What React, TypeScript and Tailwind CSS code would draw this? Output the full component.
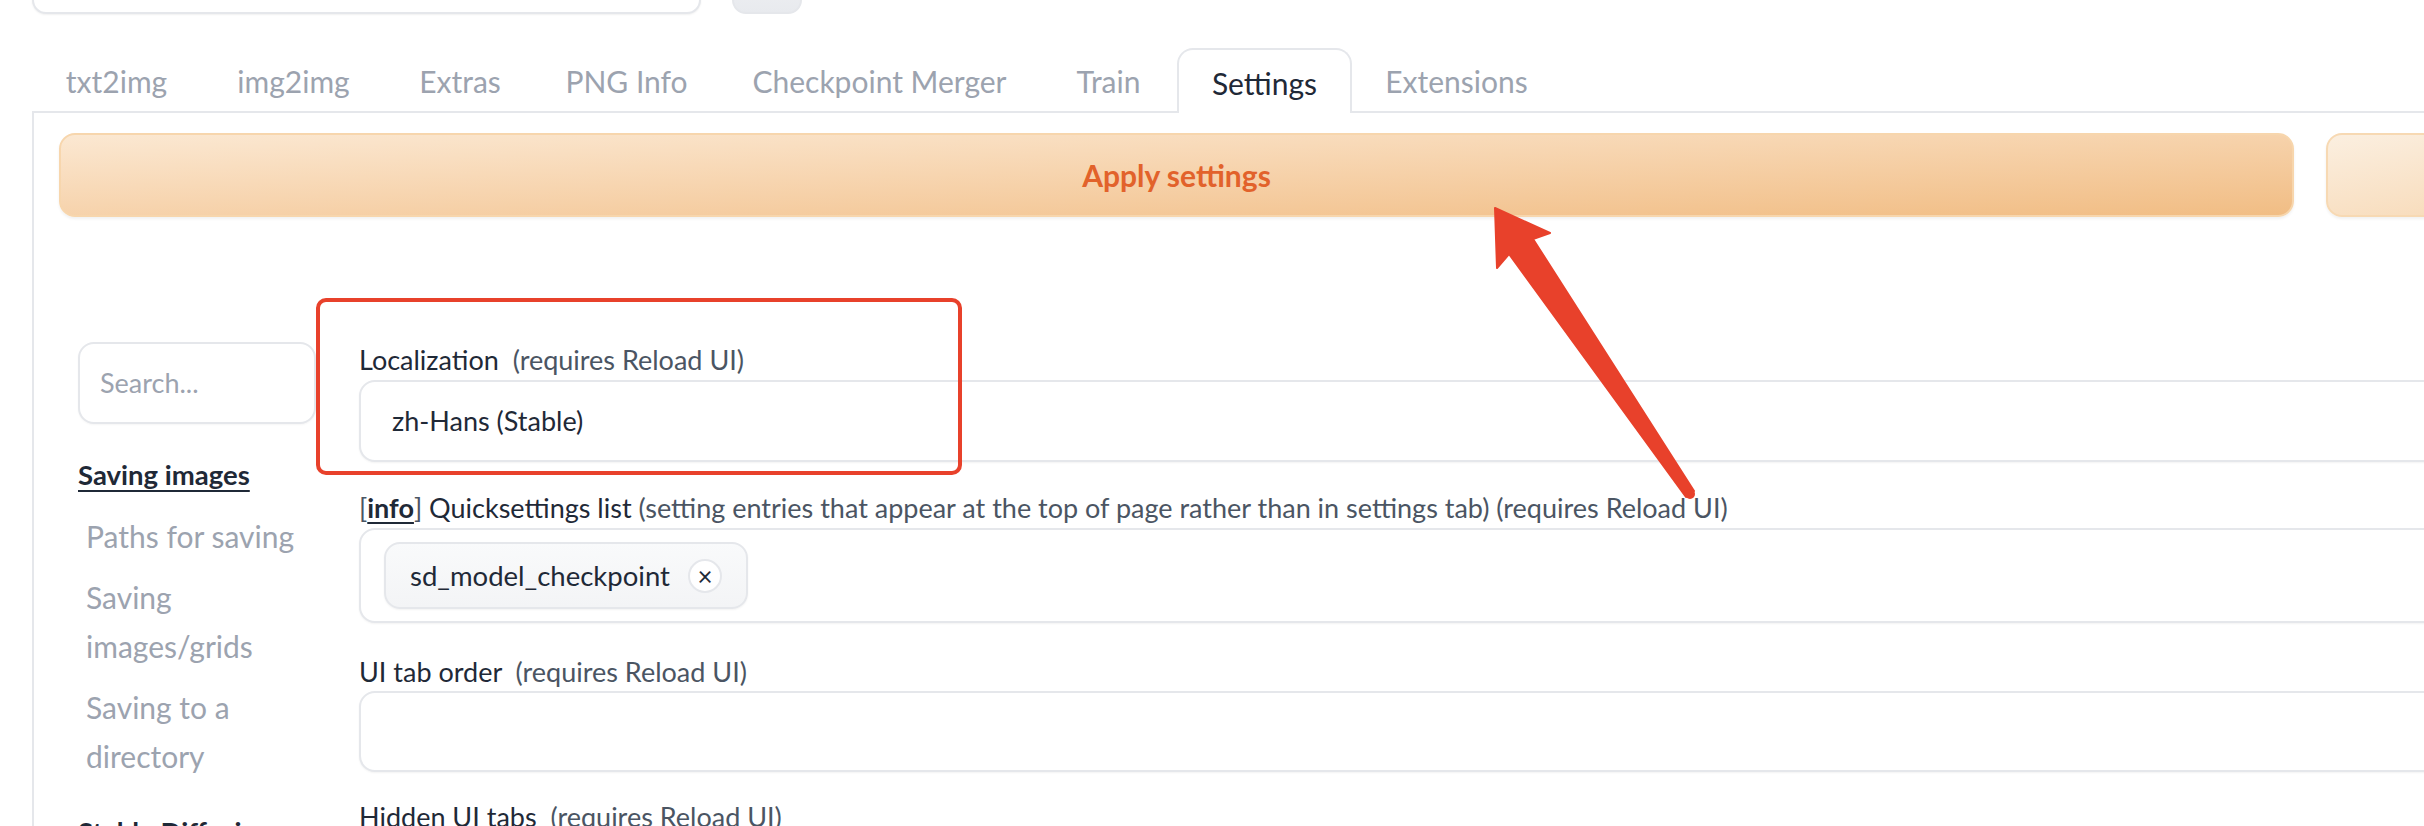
import React from "react";

const tabs: { name: string; w: string; active?: boolean }[] = [
  { name: "txt2img", w: "w-[169px]" },
  { name: "img2img", w: "w-[185px]" },
  { name: "Extras", w: "w-[148px]" },
  { name: "PNG Info", w: "w-[185px]" },
  { name: "Checkpoint Merger", w: "w-[321px]" },
  { name: "Train", w: "w-[137px]" },
  { name: "Settings", w: "w-[175px]", active: true },
  { name: "Extensions", w: "w-[209px]" },
];

function Label({ main, note }: { main: React.ReactNode; note: string }) {
  return (
    <div className="h-[36px] leading-[36px] text-[27px] whitespace-pre text-[#1f2937]">
      {main}
      <span className="text-[#4b5563]">{note}</span>
    </div>
  );
}

export default function App() {
  return (
    <div className="relative w-[2424px] h-[826px] overflow-hidden bg-white font-['Lato',sans-serif]">
      <div className="w-[2900px] pl-[32px]">
        {/* top row (mostly off-screen) */}
        <div className="-mt-[50px] flex h-[64px] gap-[31px]">
          <div className="w-[669px] h-[64px] rounded-[14px] border-2 border-[#e5e7eb] bg-white shadow-[0_1px_2px_rgba(0,0,0,0.06)]" />
          <div className="w-[70px] h-[64px] rounded-[14px] border-2 border-[#e5e7eb] bg-gradient-to-b from-[#f3f4f6] to-[#e8eaee]" />
        </div>

        {/* tabs */}
        <div className="mt-[34px] flex h-[65px] border-b-2 border-[#e5e7eb]">
          {tabs.map((t) =>
            t.active ? (
              <div
                key={t.name}
                className={`${t.w} relative z-10 -mb-[2px] flex h-[65px] items-center justify-center rounded-t-[16px] border-2 border-b-0 border-[#e5e7eb] bg-white pt-[4px] text-[30px] text-[#1f2937]`}
              >
                {t.name}
              </div>
            ) : (
              <div
                key={t.name}
                className={`${t.w} flex h-[63px] items-center justify-center pt-[4px] text-[30px] text-[#9ca3af]`}
              >
                {t.name}
              </div>
            )
          )}
        </div>

        {/* panel */}
        <div className="h-[800px] border-l-2 border-[#e5e7eb] pl-[25px] pt-[20px]">
          <div className="flex gap-[32px]">
            <div className="flex h-[84px] w-[2235px] items-center justify-center rounded-[16px] border-2 border-[#f7d6ad] bg-gradient-to-br from-[#fbe8d2] to-[#f1bd84] text-[30px] font-bold text-[#e2622b] shadow-[0_2px_3px_rgba(0,0,0,0.06)]">
              Apply settings
            </div>
            <div className="h-[84px] w-[400px] rounded-[16px] border-2 border-[#f7d9b3] bg-gradient-to-br from-[#fbefe0] to-[#f6d2a8] shadow-[0_2px_3px_rgba(0,0,0,0.06)]" />
          </div>

          <div className="mt-[125px] flex">
            {/* sidebar */}
            <div className="ml-[19px] w-[238px] shrink-0">
              <div className="flex h-[82px] items-center rounded-[16px] border-2 border-[#e5e7eb] bg-white pl-[20px] text-[27px] text-[#9ca3af] shadow-[0_1px_2px_rgba(0,0,0,0.04)]">
                Search...
              </div>
              <div className="mt-[31px] h-[40px] leading-[40px] text-[27.5px] font-bold text-[#1f2937] underline underline-offset-[5px] decoration-2">
                Saving images
              </div>
              <div className="mt-[17px] flex flex-col gap-[12px] pl-[8px] text-[30px] leading-[49px] text-[#9ca3af]">
                <div>Paths for saving</div>
                <div>Saving images/grids</div>
                <div>Saving to a directory</div>
              </div>
              <div className="mt-[31px] h-[40px] leading-[40px] text-[27.5px] font-bold text-[#1f2937]">
                Stable Diffusion
              </div>
            </div>

            {/* main */}
            <div className="ml-[43px] w-[2300px]">
              <Label main="Localization  " note="(requires Reload UI)" />
              <div className="mt-[2px] flex h-[82px] items-center rounded-[16px] border-2 border-[#e5e7eb] bg-white pl-[31px] text-[27px] text-[#1f2937] shadow-[0_1px_2px_rgba(0,0,0,0.05)]">
                zh-Hans (Stable)
              </div>

              <div className="mt-[28px]">
                <Label
                  main={
                    <>
                      <span className="text-[#4b5563]">[</span>
                      <span className="font-bold underline underline-offset-[4px] decoration-2">info</span>
                      <span className="text-[#4b5563]">]</span> Quicksettings list{" "}
                    </>
                  }
                  note="(setting entries that appear at the top of page rather than in settings tab) (requires Reload UI)"
                />
                <div className="mt-[2px] h-[95px] rounded-[16px] border-2 border-[#e5e7eb] bg-white pl-[23px] pt-[12px] shadow-[0_1px_2px_rgba(0,0,0,0.05)]">
                  <div className="flex h-[67px] w-[364px] items-center rounded-[16px] border-2 border-[#e5e7eb] bg-gradient-to-b from-[#f9fafb] to-[#f3f4f6] pl-[24px] text-[27.5px] text-[#1f2937] shadow-[0_1px_2px_rgba(0,0,0,0.05)]">
                    <span>sd_model_checkpoint</span>
                    <span className="ml-auto mr-[24px] flex h-[34px] w-[34px] items-center justify-center rounded-full border-2 border-[#e5e7eb] bg-white text-[26px] leading-none text-[#1f2937]">
                      ×
                    </span>
                  </div>
                </div>
              </div>

              <div className="mt-[31px]">
                <Label main="UI tab order  " note="(requires Reload UI)" />
                <div className="mt-[1px] h-[81px] rounded-[16px] border-2 border-[#e5e7eb] bg-white shadow-[0_1px_2px_rgba(0,0,0,0.05)]" />
              </div>

              <div className="mt-[27px]">
                <Label main="Hidden UI tabs  " note="(requires Reload UI)" />
              </div>
            </div>
          </div>
        </div>
      </div>

      {/* annotation: red box */}
      <div className="pointer-events-none absolute left-[316px] top-[298px] h-[177px] w-[646px] rounded-[10px] border-4 border-[#e8412b]" />

      {/* annotation: arrow */}
      <svg
        className="pointer-events-none absolute left-0 top-0"
        width="2424"
        height="826"
        viewBox="0 0 2424 826"
      >
        <polygon
          points="1495,208 1550,233 1533,239 1694,491 1686,497 1509,254 1497,268"
          fill="#e8412b"
          stroke="#e8412b"
          strokeWidth="2"
          strokeLinejoin="round"
        />
        <circle cx="1690" cy="494" r="5" fill="#e8412b" />
      </svg>
    </div>
  );
}
